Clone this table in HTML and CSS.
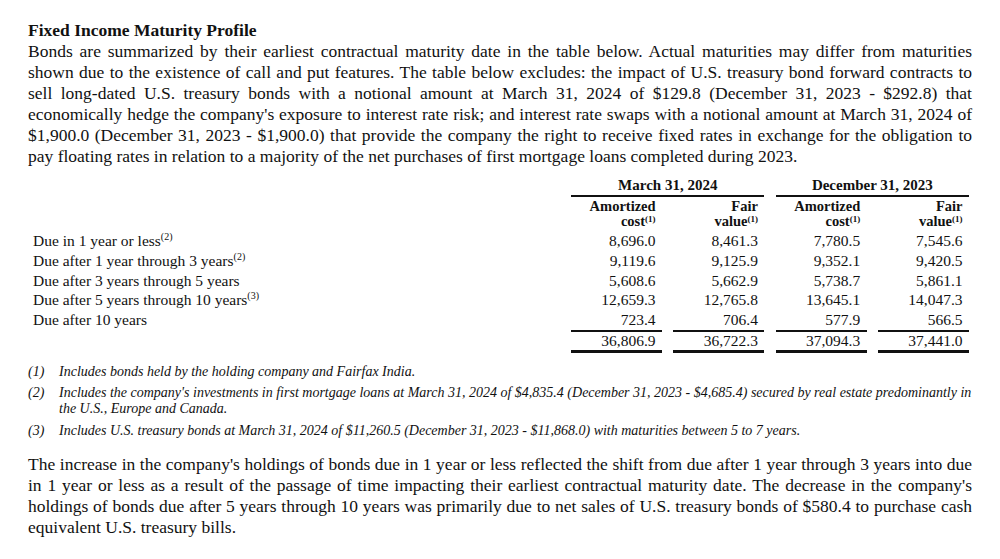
FILE: index.html
```html
<!DOCTYPE html>
<html lang="en">

<head>
    <meta charset="UTF-8">
    <meta name="viewport" content="width=device-width, initial-scale=1.0">
    <title>Fixed Income Maturity Profile</title>
    <link rel="stylesheet" href="styles.css">
</head>

<body>
    <div class="page">
        <h2>Fixed Income Maturity Profile</h2>
        <p class="text">Bonds are summarized by their earliest contractual maturity date in the table below. Actual maturities may differ from maturities shown due to the existence of call and put features. The table below excludes: the impact of U.S. treasury bond forward contracts to sell long-dated U.S. treasury bonds with a notional amount at March 31, 2024 of $129.8 (December 31, 2023 - $292.8) that economically hedge the company's exposure to interest rate risk; and interest rate swaps with a notional amount at March 31, 2024 of $1,900.0 (December 31, 2023 - $1,900.0) that provide the company the right to receive fixed rates in exchange for the obligation to pay floating rates in relation to a majority of the net purchases of first mortgage loans completed during 2023.</p>

        <div class="maturity">
            <!-- period headers -->
            <div></div>
            <div class="period">March 31, 2024</div>
            <div class="period">December 31, 2023</div>

            <!-- column headers -->
            <div></div>
            <div class="colhead">Amortized<br>cost<sup>(1)</sup></div>
            <div class="colhead">Fair<br>value<sup>(1)</sup></div>
            <div class="colhead">Amortized<br>cost<sup>(1)</sup></div>
            <div class="colhead">Fair<br>value<sup>(1)</sup></div>

            <div class="label">Due in 1 year or less<sup>(2)</sup></div>
            <div class="num">8,696.0</div>
            <div class="num">8,461.3</div>
            <div class="num">7,780.5</div>
            <div class="num">7,545.6</div>

            <div class="label">Due after 1 year through 3 years<sup>(2)</sup></div>
            <div class="num">9,119.6</div>
            <div class="num">9,125.9</div>
            <div class="num">9,352.1</div>
            <div class="num">9,420.5</div>

            <div class="label">Due after 3 years through 5 years</div>
            <div class="num">5,608.6</div>
            <div class="num">5,662.9</div>
            <div class="num">5,738.7</div>
            <div class="num">5,861.1</div>

            <div class="label">Due after 5 years through 10 years<sup>(3)</sup></div>
            <div class="num">12,659.3</div>
            <div class="num">12,765.8</div>
            <div class="num">13,645.1</div>
            <div class="num">14,047.3</div>

            <div class="label">Due after 10 years</div>
            <div class="num">723.4</div>
            <div class="num">706.4</div>
            <div class="num">577.9</div>
            <div class="num">566.5</div>

            <!-- totals -->
            <div></div>
            <div class="num total">36,806.9</div>
            <div class="num total">36,722.3</div>
            <div class="num total">37,094.3</div>
            <div class="num total">37,441.0</div>
        </div>

        <ol class="notes">
            <li><span class="mark">(1)</span><span>Includes bonds held by the holding company and Fairfax India.</span></li>
            <li><span class="mark">(2)</span><span>Includes the company's investments in first mortgage loans at March 31, 2024 of $4,835.4 (December 31, 2023 - $4,685.4) secured by real estate predominantly in the U.S., Europe and Canada.</span></li>
            <li><span class="mark">(3)</span><span>Includes U.S. treasury bonds at March 31, 2024 of $11,260.5 (December 31, 2023 - $11,868.0) with maturities between 5 to 7 years.</span></li>
        </ol>

        <p class="text after">The increase in the company's holdings of bonds due in 1 year or less reflected the shift from due after 1 year through 3 years into due in 1 year or less as a result of the passage of time impacting their earliest contractual maturity date. The decrease in the company's holdings of bonds due after 5 years through 10 years was primarily due to net sales of U.S. treasury bonds of $580.4 to purchase cash equivalent U.S. treasury bills.</p>
    </div>
</body>

</html>
```

FILE: styles.css
```css
/* General styles */
body {
    margin: 0;
    padding: 0;
    background: #fff;
    color: #111;
    font-family: "Liberation Serif", "Times New Roman", serif;
}

.page {
    padding: 20px 28px 0 28px;
}

/* Title and paragraphs */
h2 {
    margin: 0;
    font-size: 17.5px;
    line-height: 21px;
    font-weight: bold;
}

.text {
    margin: 0;
    font-size: 17.5px;
    line-height: 21px;
    text-align: justify;
}

.text.after {
    margin-top: 15px;
}

/* Maturity table */
.maturity {
    display: grid;
    grid-template-columns: 1fr repeat(4, 91px);
    column-gap: 11.3px;
    margin: 9px 3px 0 0;
    font-size: 15.5px;
}

.period {
    grid-column: span 2;
    text-align: center;
    font-weight: bold;
    font-size: 15px;
    line-height: 18px;
    padding-bottom: 1px;
    border-bottom: 2px solid #111;
}

.colhead {
    text-align: right;
    font-weight: bold;
    font-size: 14.5px;
    line-height: 15px;
    padding: 1.5px 6.5px 2.5px 0;
}

.colhead sup {
    font-size: 9px;
    vertical-align: 4px;
}

.label {
    padding-left: 5px;
    line-height: 19.75px;
    white-space: nowrap;
}

.num {
    text-align: right;
    line-height: 19.75px;
    padding-right: 6.5px;
}

.total {
    line-height: 18px;
    border-top: 2px solid #111;
    border-bottom: 3px solid #111;
}

sup {
    font-size: 10px;
    line-height: 0;
    vertical-align: 6px;
}

/* Footnotes */
.notes {
    list-style: none;
    margin: 11px 0 0 0;
    padding: 0;
    font-size: 14px;
    font-style: italic;
    line-height: 16px;
}

.notes li {
    display: flex;
    margin-bottom: 5.5px;
}

.notes .mark {
    flex: 0 0 31px;
}
```
